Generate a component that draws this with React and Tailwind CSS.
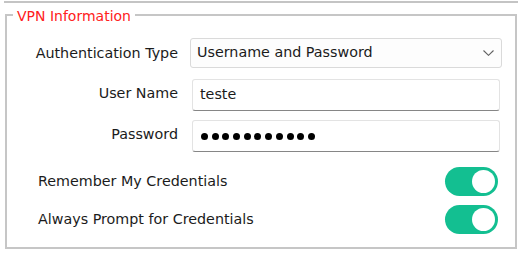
import { useState } from 'react';

function Toggle({ on, onChange }) {
  return (
    <button
      type="button"
      onClick={() => onChange(!on)}
      className={`flex h-[29px] w-[53px] items-center rounded-full px-[3px] ${on ? 'justify-end bg-[#13bf91]' : 'justify-start bg-[#c9c9c9]'}`}
    >
      <span className="h-[23px] w-[23px] rounded-full bg-white" />
    </button>
  );
}

export default function App() {
  const [remember, setRemember] = useState(true);
  const [prompt, setPrompt] = useState(true);

  return (
    <div className="h-[259px] w-[520px] overflow-hidden bg-white font-['DejaVu_Sans',sans-serif] text-[14.3px] text-[#1b1b1b]">
      {/* edge of the panel above */}
      <div className="ml-[4px] mr-[2px] h-[3px] border-b-2 border-[#c4c4c4]" />

      <fieldset className="ml-[5px] mt-[1px] h-[245px] w-[512px] border-2 border-[#c6c6c6] px-0 pb-0 pt-[13px]">
        <legend className="ml-[6px] px-[4px] pt-[4px] text-[14px] leading-[17px] text-[#ff2020]">VPN Information</legend>

        <div className="grid grid-cols-[171px_1fr] items-center gap-x-[12px] pr-[13px]">
          <label className="text-right leading-[30px]">Authentication Type</label>
          <div className="flex h-[30px] items-center justify-between rounded-[3px] border border-[#dadada] bg-[#fdfdfd] pl-[6px] pr-[7px]">
            <span>Username and Password</span>
            <svg width="11" height="6" viewBox="0 0 11 6" fill="none" stroke="#606060" strokeWidth="1.1">
              <path d="M0.5 0.5 L5.5 5.3 L10.5 0.5" />
            </svg>
          </div>

          <label className="mt-[11px] pb-[3px] text-right">User Name</label>
          <div className="mx-[2px] mt-[11px] flex h-[32px] items-center rounded-[3px] border border-[#e3e3e3] border-b-[#868686] bg-white pl-[7px]">
            teste
          </div>

          <label className="mt-[9px] pb-[3px] text-right">Password</label>
          <div className="mx-[2px] mt-[9px] flex h-[32px] items-center gap-[3.7px] rounded-[3px] border border-[#e3e3e3] border-b-[#868686] bg-white pl-[8px]">
            {Array.from({ length: 11 }).map((_, i) => (
              <span key={i} className="h-[7px] w-[7px] rounded-full bg-black" />
            ))}
          </div>
        </div>

        <div className="mt-[15px] flex flex-col gap-[9px] pl-[31px] pr-[17px]">
          <div className="flex items-center justify-between">
            <span>Remember My Credentials</span>
            <Toggle on={remember} onChange={setRemember} />
          </div>
          <div className="flex items-center justify-between">
            <span>Always Prompt for Credentials</span>
            <Toggle on={prompt} onChange={setPrompt} />
          </div>
        </div>
      </fieldset>
    </div>
  );
}
